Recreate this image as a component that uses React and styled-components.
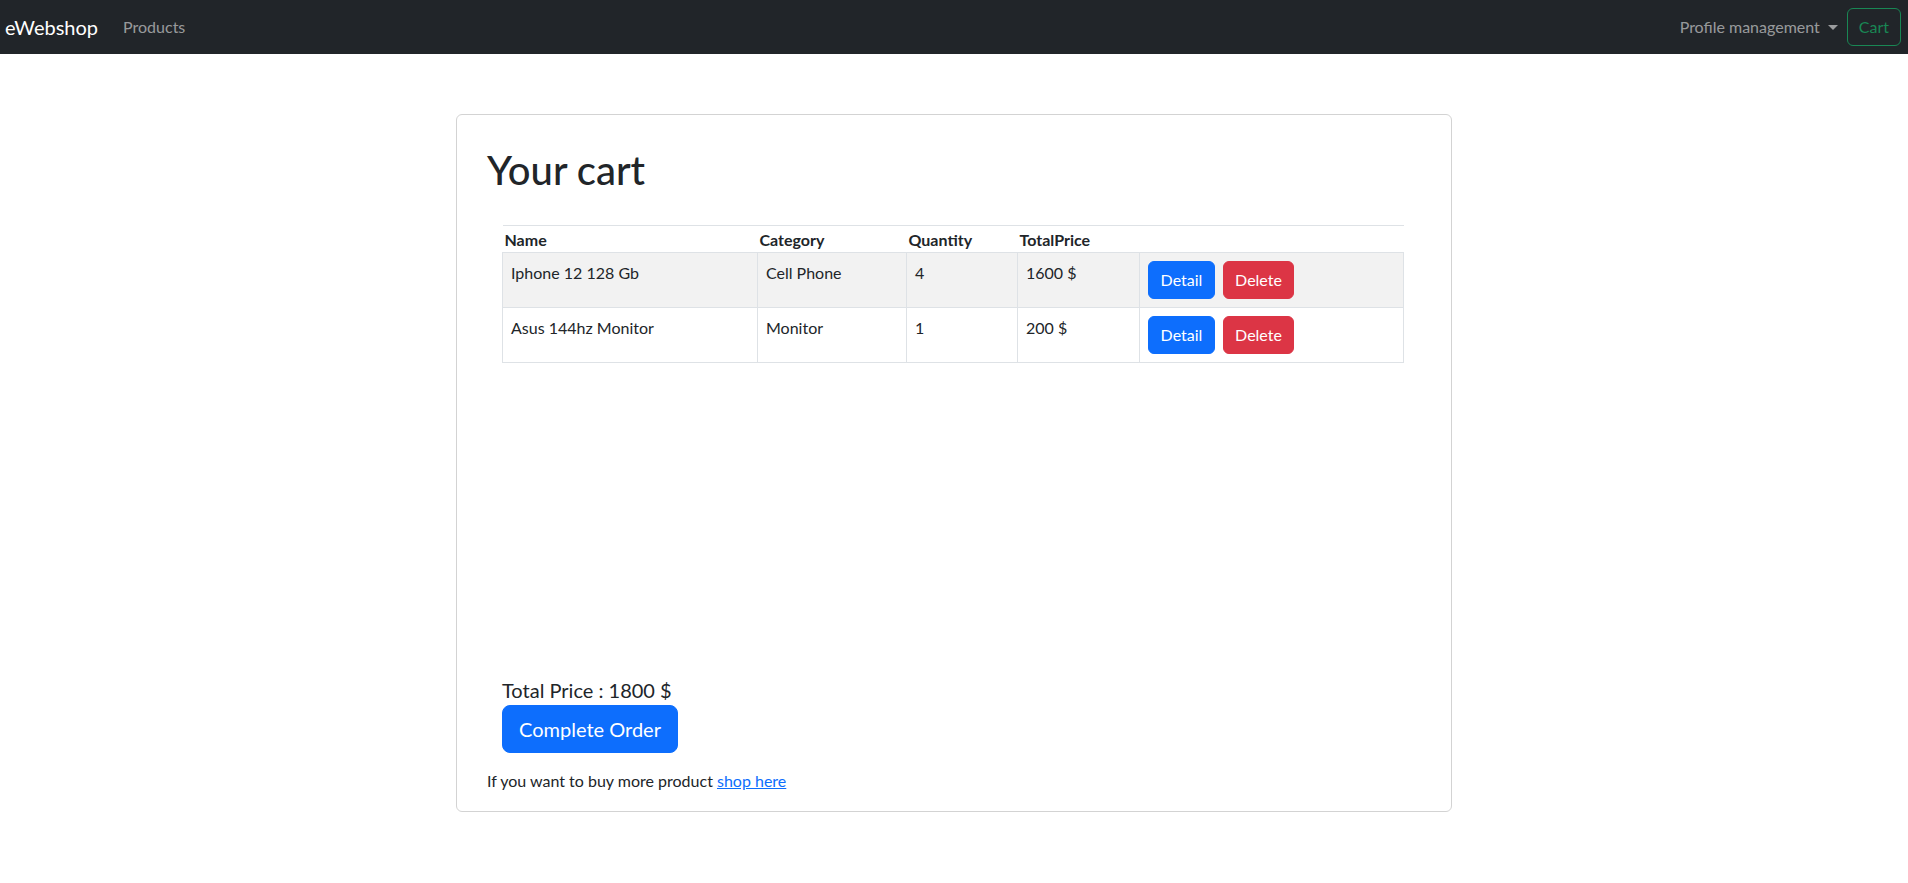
import React from "react";
import styled, { createGlobalStyle } from "styled-components";

const GlobalStyle = createGlobalStyle`
  body {
    margin: 0;
    font-family: Lato, "Liberation Sans", sans-serif;
    font-size: 16px;
    line-height: 1.5;
    color: #212529;
    background: #fff;
  }
  * { box-sizing: border-box; }
`;

// navbar
const NavBar = styled.nav`
  height: 54px;
  background: #212529;
  display: flex;
  align-items: center;
  padding: 0 7px 0 5px;
`;

const Brand = styled.a`
  font-size: 20px;
  line-height: 30px;
  color: #fff;
  text-decoration: none;
  margin-right: 25px;
`;

const NavLink = styled.a`
  color: rgba(255, 255, 255, 0.55);
  text-decoration: none;
  display: flex;
  align-items: center;
`;

const Caret = styled.span`
  display: inline-block;
  margin-left: 8px;
  border-top: 5px solid rgba(255, 255, 255, 0.55);
  border-left: 5px solid transparent;
  border-right: 5px solid transparent;
`;

const NavRight = styled.div`
  margin-left: auto;
  display: flex;
  align-items: center;
  gap: 9px;
`;

const OutlineButton = styled.button`
  font: inherit;
  height: 38px;
  padding: 0 11px;
  color: #198754;
  background: transparent;
  border: 1px solid #198754;
  border-radius: 6px;
`;

// card
const Card = styled.div`
  width: 996px;
  margin: 60px auto 0;
  border: 1px solid #d3d3d3;
  border-radius: 6px;
  padding: 31px 30px 18px;
`;

const Title = styled.h1`
  margin: 0;
  font-size: 40px;
  font-weight: 500;
  line-height: 48px;
`;

const TableArea = styled.div`
  margin: 31px 15px 0;
  min-height: 450px;
`;

const Table = styled.table`
  width: 901px;
  table-layout: fixed;
  border-collapse: collapse;
  border-top: 1px solid #dee2e6;
`;

const Th = styled.th`
  text-align: left;
  font-weight: 700;
  padding: 2px 2px 0;
  line-height: 24px;
  width: ${(p) => p.$w}px;
`;

const Row = styled.tr`
  background: ${(p) => (p.$striped ? "#f2f2f2" : "#fff")};
`;

const Td = styled.td`
  border: 1px solid #dee2e6;
  padding: 8px 8px;
  height: 55px;
  vertical-align: top;
  line-height: 24px;
`;

const Actions = styled.div`
  display: flex;
  gap: 8px;
`;

const Btn = styled.button`
  font: inherit;
  color: #fff;
  border: 1px solid ${(p) => p.$bg};
  background: ${(p) => p.$bg};
  border-radius: 6px;
  height: 38px;
  padding: 0 11px;
  min-width: ${(p) => p.$w}px;
`;

const Footer = styled.div`
  margin: 0 15px;
`;

const TotalText = styled.div`
  font-size: 20px;
  line-height: 30px;
`;

const BigButton = styled.button`
  font: inherit;
  font-size: 20px;
  height: 48px;
  padding: 0 16px;
  color: #fff;
  background: #0d6efd;
  border: 1px solid #0d6efd;
  border-radius: 8px;
  width: 176px;
`;

const Note = styled.p`
  margin: 16px 0 0;
`;

const ShopLink = styled.a`
  color: #0d6efd;
  text-decoration: underline;
`;

const items = [
  { name: "Iphone 12 128 Gb", category: "Cell Phone", quantity: 4, total: "1600 $" },
  { name: "Asus 144hz Monitor", category: "Monitor", quantity: 1, total: "200 $" },
];

export default function App() {
  return (
    <>
      <GlobalStyle />
      <NavBar>
        <Brand href="#">eWebshop</Brand>
        <NavLink href="#">Products</NavLink>
        <NavRight>
          <NavLink href="#">
            Profile management
            <Caret />
          </NavLink>
          <OutlineButton>Cart</OutlineButton>
        </NavRight>
      </NavBar>

      <Card>
        <Title>Your cart</Title>
        <TableArea>
          <Table>
            <thead>
              <tr>
                <Th $w={255}>Name</Th>
                <Th $w={149}>Category</Th>
                <Th $w={111}>Quantity</Th>
                <Th $w={122}>TotalPrice</Th>
                <Th $w={264}></Th>
              </tr>
            </thead>
            <tbody>
              {items.map((item, idx) => (
                <Row key={item.name} $striped={idx % 2 === 0}>
                  <Td>{item.name}</Td>
                  <Td>{item.category}</Td>
                  <Td>{item.quantity}</Td>
                  <Td>{item.total}</Td>
                  <Td>
                    <Actions>
                      <Btn $bg="#0d6efd" $w={67}>Detail</Btn>
                      <Btn $bg="#dc3545" $w={71}>Delete</Btn>
                    </Actions>
                  </Td>
                </Row>
              ))}
            </tbody>
          </Table>
        </TableArea>
        <Footer>
          <TotalText>Total Price : 1800 $</TotalText>
          <BigButton>Complete Order</BigButton>
        </Footer>
        <Note>
          If you want to buy more product <ShopLink href="#">shop here</ShopLink>
        </Note>
      </Card>
    </>
  );
}
